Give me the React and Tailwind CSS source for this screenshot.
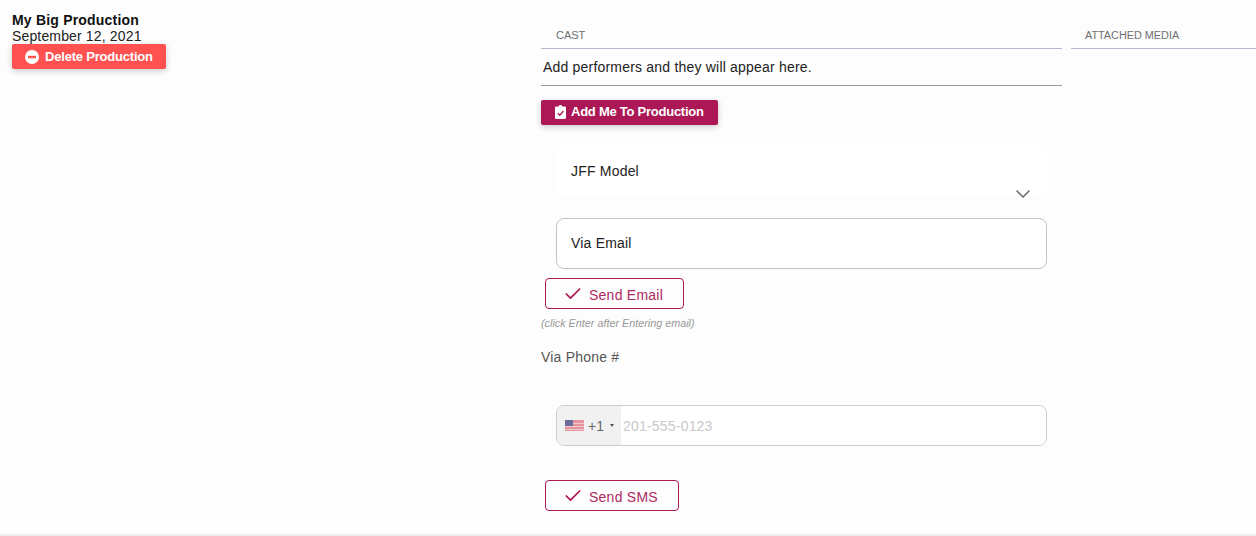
import { Check, ChevronDown } from "lucide-react";

const font = { fontFamily: '"Liberation Sans", Arial, sans-serif' };

function MinusCircle() {
  return (
    <svg width="14" height="14" viewBox="0 0 14 14" className="shrink-0">
      <circle cx="7" cy="7" r="7" fill="#fff" />
      <rect x="3" y="5.8" width="8" height="2.4" fill="#fe5150" />
    </svg>
  );
}

function ClipboardCheck() {
  return (
    <svg width="11" height="14" viewBox="0 0 11 14" className="shrink-0">
      <path d="M1.2 1.6H3.6C3.8.6 4.6 0 5.5 0S7.2.6 7.4 1.6H9.8C10.5 1.6 11 2.1 11 2.8V12.8C11 13.5 10.5 14 9.8 14H1.2C.5 14 0 13.5 0 12.8V2.8C0 2.1.5 1.6 1.2 1.6Z" fill="#fff" />
      <path d="M2.8 8.2L4.8 10.2L8.4 6" fill="none" stroke="#ab1855" strokeWidth="1.3" />
    </svg>
  );
}

function UsFlag() {
  return (
    <svg width="19" height="11" viewBox="0 0 19 11" className="shrink-0">
      <rect width="19" height="11" fill="#e3949f" />
      <rect y="3" width="19" height="1" fill="#efc9ce" />
      <rect y="6" width="19" height="1" fill="#efc9ce" />
      <rect y="9" width="19" height="1" fill="#efc9ce" />
      <rect width="8" height="6" fill="#6a6d9c" />
    </svg>
  );
}

function OutlineButton({ label, width }) {
  return (
    <button className={`ml-1 flex h-[31px] items-center gap-[6px] rounded-[4px] border border-[#ab1855] pl-[17px] pt-[3px] text-sm tracking-[0.25px] text-[#b02a62] ${width}`}>
      <Check size={20} strokeWidth={2.1} className="-mt-[3px] text-[#ab1855]" />
      {label}
    </button>
  );
}

export default function App() {
  return (
    <div style={font} className="flex h-[536px] w-[1256px] overflow-hidden border-b-2 border-[#eeeeee] bg-[#fdfdfd] text-[#222]">
      {/* left: production info */}
      <div className="w-[541px] shrink-0 pl-3 pt-3">
        <p className="text-sm font-bold leading-4 tracking-[0.2px] text-[#111]">My Big Production</p>
        <p className="text-sm leading-4 tracking-[0.15px]">September 12, 2021</p>
        <button className="flex h-[25px] w-[154px] items-center gap-[6px] rounded-[2px] bg-[#fe5150] pl-[13px] text-[13px] font-bold tracking-[-0.2px] text-white shadow-[0_2px_6px_rgba(0,0,0,0.2)]">
          <MinusCircle />
          Delete Production
        </button>
      </div>

      {/* middle: cast */}
      <div className="w-[521px] shrink-0 pt-[27px]">
        <div className="h-[22px] border-b border-[#bcb4d4] pl-[15px] text-[11px] leading-4 text-[#6f6f6f]">CAST</div>
        <div className="flex h-[37px] items-center border-b border-[#999] pl-[2px] text-sm tracking-[0.2px]">
          Add performers and they will appear here.
        </div>
        <button className="mt-[14px] flex h-[25px] w-[177px] items-center gap-[5px] rounded-[2px] bg-[#ab1855] pb-[1px] pl-[14px] text-[13px] font-bold tracking-[-0.25px] text-white shadow-[0_2px_6px_rgba(0,0,0,0.2)]">
          <ClipboardCheck />
          Add Me To Production
        </button>

        <div className="relative ml-[15px] mt-[20px] flex h-[52px] w-[491px] items-start rounded-[10px] bg-white pl-[15px] pt-[18px] text-sm leading-4 tracking-[0.2px]">
          JFF Model
          <ChevronDown size={24} strokeWidth={1.5} className="absolute right-[12px] top-[37px] text-[#666]" />
        </div>

        <div className="ml-[15px] mt-[21px] flex h-[51px] w-[491px] items-center rounded-[8px] border border-[#c4c4c4] bg-white pb-[1px] pl-[14px] text-sm tracking-[0.2px]">
          Via Email
        </div>

        <div className="mt-[9px]">
          <OutlineButton label="Send Email" width="w-[139px]" />
        </div>
        <p className="mt-[8px] text-[10.8px] italic leading-3 text-[#999]">(click Enter after Entering email)</p>
        <p className="mt-[20px] text-sm leading-4 tracking-[0.2px] text-[#555]">Via Phone #</p>

        <div className="ml-[15px] mt-[40px] flex h-[41px] w-[491px] overflow-hidden rounded-[8px] border border-[#cccccc] bg-white">
          <div className="flex w-[64px] shrink-0 items-center bg-[#f1f1f1] pl-[8px] text-sm text-[#666]">
            <UsFlag />
            <span className="ml-[4px]">+1</span>
            <span className="ml-[6px] h-0 w-0 border-x-[2.5px] border-t-[3px] border-x-transparent border-t-[#555]" />
          </div>
          <input
            readOnly
            placeholder="201-555-0123"
            className="min-w-0 flex-1 bg-white pl-[2px] text-sm tracking-[0.2px] outline-none placeholder:text-[#c9c9c9]"
          />
        </div>

        <div className="mt-[34px]">
          <OutlineButton label="Send SMS" width="w-[134px]" />
        </div>
      </div>

      {/* right: media */}
      <div className="ml-[9px] flex-1 pt-[27px]">
        <div className="h-[22px] border-b border-[#bcb4d4] pl-[14px] text-[10.85px] leading-4 text-[#6f6f6f]">ATTACHED MEDIA</div>
      </div>
    </div>
  );
}
